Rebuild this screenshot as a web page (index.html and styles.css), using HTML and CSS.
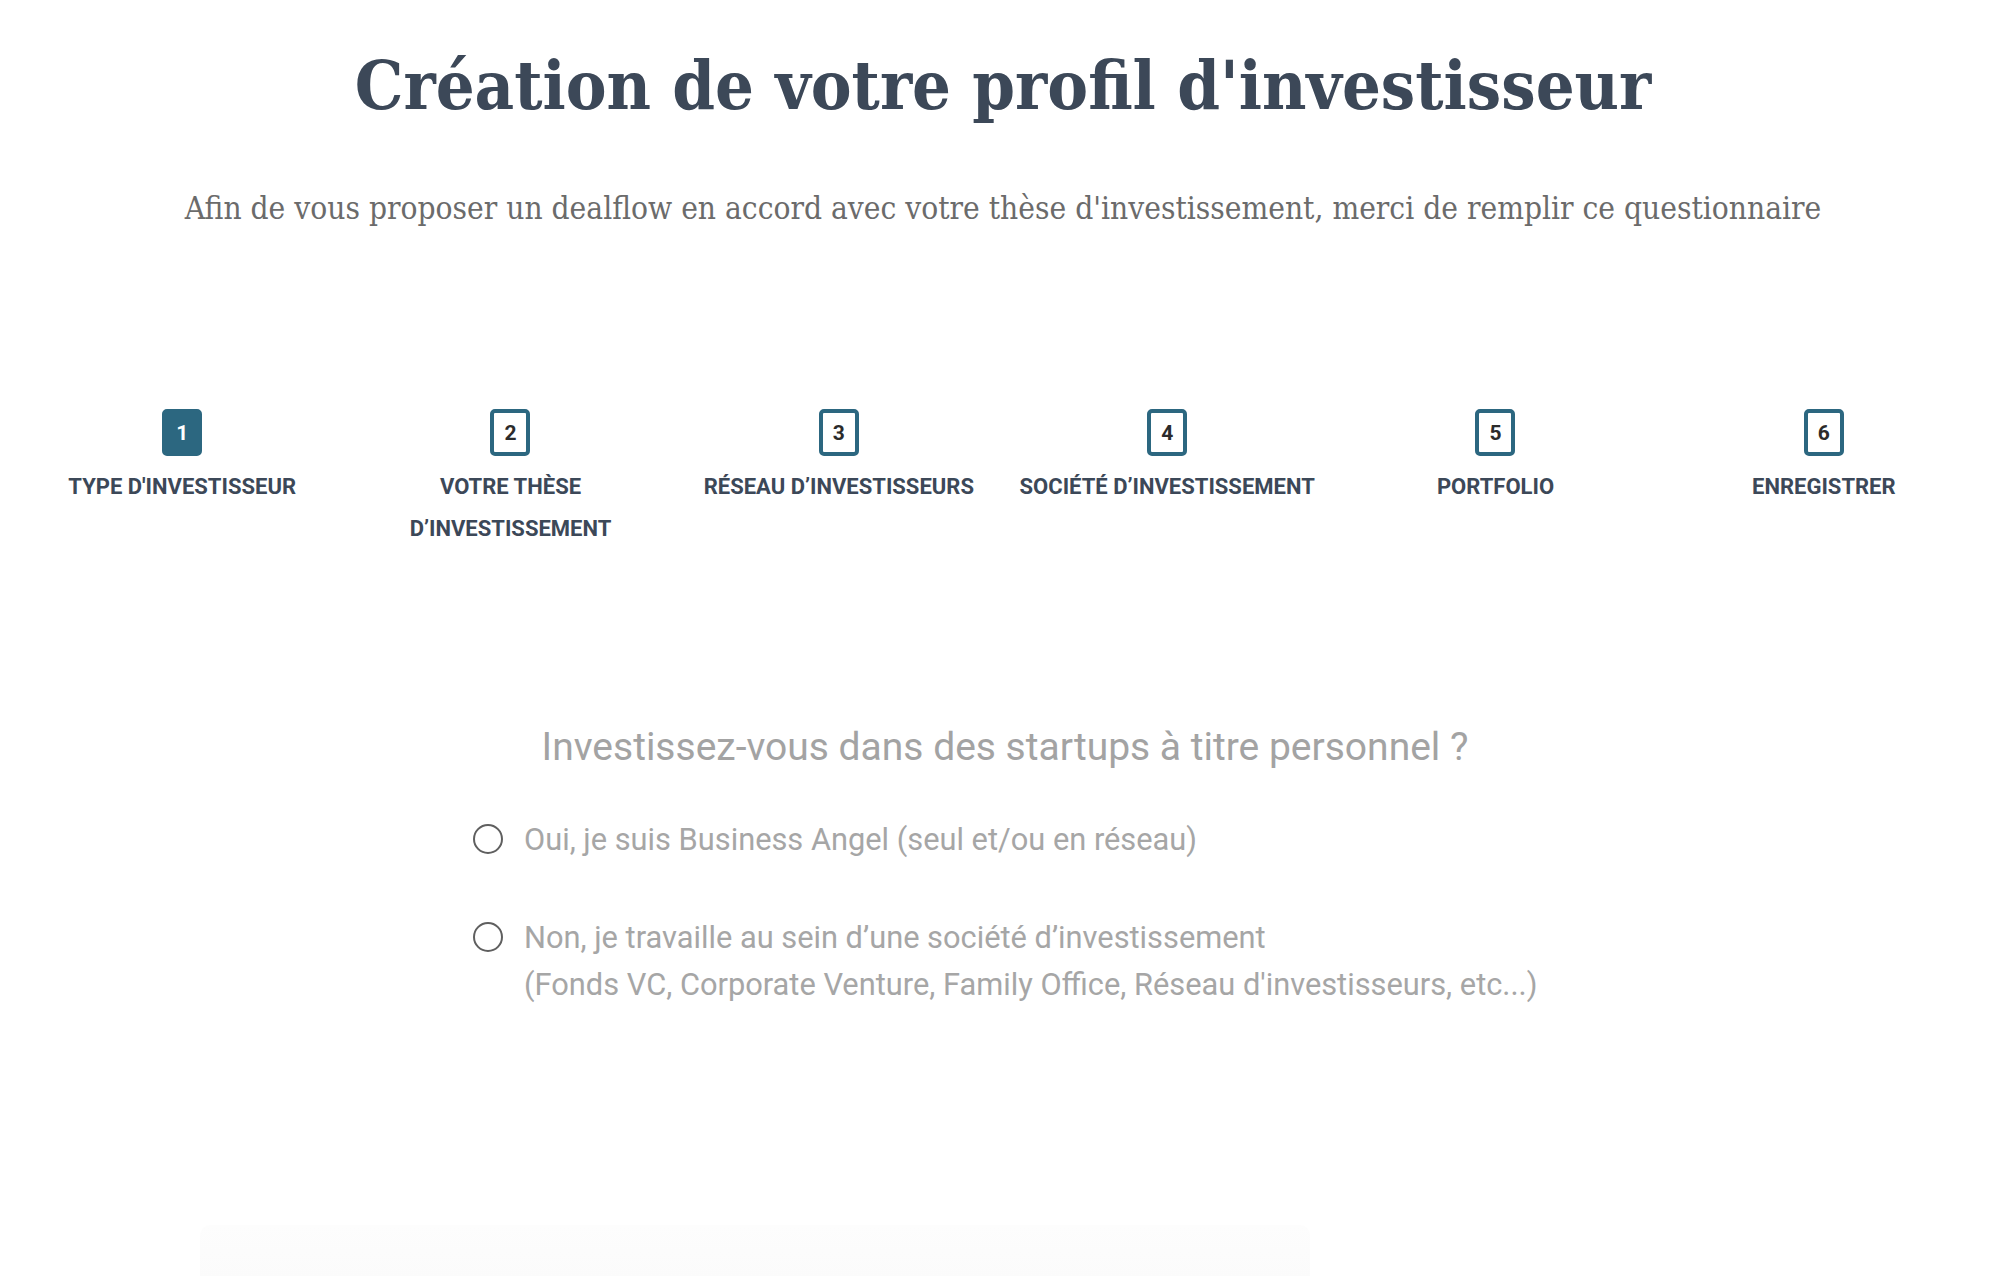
FILE: index.html
```html
<html>
	<head>
		<link rel="stylesheet" href="styles.css">
	</head>
	<body>
		<div id="header">
			<h1 class="title">Création de votre profil d'investisseur</h1>
			<p class="subtitle">Afin de vous proposer un dealflow en accord avec votre thèse d'investissement, merci de remplir ce questionnaire</p>
		</div>
		<div id="steps">
			<div class="step active">
				<span class="num">1</span>
				<span class="label">Type d'investisseur</span>
			</div>
			<div class="step">
				<span class="num">2</span>
				<span class="label">Votre thèse<br>d’investissement</span>
			</div>
			<div class="step">
				<span class="num">3</span>
				<span class="label">Réseau d’investisseurs</span>
			</div>
			<div class="step">
				<span class="num">4</span>
				<span class="label">Société d’investissement</span>
			</div>
			<div class="step">
				<span class="num">5</span>
				<span class="label">Portfolio</span>
			</div>
			<div class="step">
				<span class="num">6</span>
				<span class="label">Enregistrer</span>
			</div>
		</div>
		<div id="question">
			<h2>Investissez-vous dans des startups à titre personnel ?</h2>
			<div class="options">
				<label class="option">
					<span class="radio"></span>
					<span class="text">Oui, je suis Business Angel (seul et/ou en réseau)</span>
				</label>
				<label class="option">
					<span class="radio"></span>
					<span class="text">Non, je travaille au sein d’une société d’investissement<br>(Fonds VC, Corporate Venture, Family Office, Réseau d'investisseurs, etc...)</span>
				</label>
			</div>
		</div>
		<div id="footer-shadow"></div>
	</body>
</html>
```

FILE: styles.css
```css
body {
	margin: 0;
	background-color: white;
	font-family: Roboto, "Liberation Sans", sans-serif;
	overflow: hidden;
}
#header {
	text-align: center;
	padding: 40px 0 0 12px;
}
.title {
	font-family: "DejaVu Serif Condensed", "DejaVu Serif", serif;
	font-weight: bold;
	font-size: 68px;
	line-height: 90px;
	color: #3c4858;
	margin: 0;
}
.subtitle {
	font-family: "DejaVu Serif Condensed", "DejaVu Serif", serif;
	font-size: 31.4px;
	line-height: 40px;
	color: #6b6b6b;
	margin: 58px 0 0 0;
}
#steps {
	display: grid;
	grid-template-columns: repeat(6, 1fr);
	padding: 0 6px 0 18px;
	margin-top: 181px;
}
.step {
	display: flex;
	flex-direction: column;
	align-items: center;
	text-align: center;
}
.step .num {
	display: flex;
	align-items: center;
	justify-content: center;
	width: 32px;
	height: 39px;
	border: 4px solid #2c6780;
	border-radius: 5px;
	font-size: 21px;
	font-weight: bold;
	color: #2b2b2b;
}
.step.active .num {
	background-color: #2c6780;
	color: white;
}
.step .label {
	margin-top: 10px;
	font-size: 22px;
	font-weight: bold;
	line-height: 42px;
	text-transform: uppercase;
	color: #3c4858;
}
#question {
	margin-top: 172px;
}
#question h2 {
	text-align: center;
	font-weight: normal;
	font-size: 39px;
	color: #a3a3a3;
	margin: 0 0 0 16px;
	line-height: 50px;
}
.options {
	margin: 44px 0 0 473px;
}
.option {
	display: flex;
	align-items: flex-start;
	margin-bottom: 51px;
}
.radio {
	width: 26px;
	height: 26px;
	border: 2px solid #5f5f5f;
	border-radius: 50%;
	margin-top: 8px;
	flex-shrink: 0;
}
.option .text {
	margin-left: 21px;
	font-size: 30.8px;
	line-height: 47px;
	color: #a6a6a6;
}
#footer-shadow {
	margin: 217px 0 0 200px;
	width: 1110px;
	height: 80px;
	background: linear-gradient(#fdfdfd, #fafafa);
	border-radius: 10px;
}
```
